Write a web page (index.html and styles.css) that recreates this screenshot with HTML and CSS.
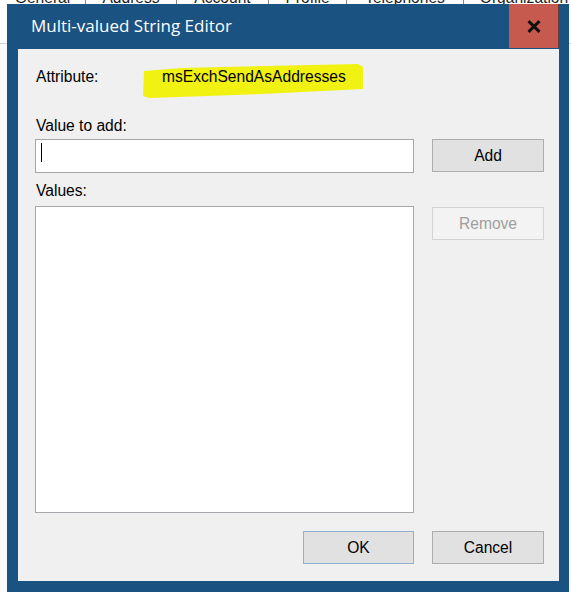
FILE: index.html
```html
<!DOCTYPE html>
<html lang="en">
<head>
<meta charset="utf-8">
<title>Multi-valued String Editor</title>
<link rel="stylesheet" href="styles.css">
</head>
<body>
<div class="desktop">
  <div class="sheet">
    <div class="tabstrip">
      <div class="tab t1">General</div>
      <div class="tab t2">Address</div>
      <div class="tab t3">Account</div>
      <div class="tab t4">Profile</div>
      <div class="tab t5">Telephones</div>
      <div class="tab t6">Organization</div>
    </div>
    <div class="sheet-gap"></div>
    <div class="sheet-body"></div>
  </div>

  <div class="dialog">
    <div class="titlebar">
      <div class="title">Multi-valued String Editor</div>
      <div class="close">
        <svg class="close-x" viewBox="0 0 14 13" width="14" height="13">
          <path d="M1.5 1.2 L12.5 11.8 M12.5 1.2 L1.5 11.8" stroke="#111" stroke-width="3" fill="none"/>
        </svg>
      </div>
    </div>
    <div class="panel">
      <div class="attr-row">
        <span class="label attr-label">Attribute:</span>
        <span class="attr-value">
          <svg class="marker" viewBox="0 0 222 36" width="222" height="36">
            <polygon points="2,8 40,5 216,1 221,4 221,26 120,31 8,35 1,33" fill="#f2f212"/>
          </svg>
          <span class="attr-text">msExchSendAsAddresses</span>
        </span>
      </div>

      <div class="label field-label">Value to add:</div>
      <div class="row input-row">
        <div class="textbox"><span class="caret"></span></div>
        <div class="btn">Add</div>
      </div>

      <div class="label values-label">Values:</div>
      <div class="row list-row">
        <div class="listbox"></div>
        <div class="btn btn-disabled">Remove</div>
      </div>

      <div class="row footer-row">
        <div class="btn btn-default">OK</div>
        <div class="btn">Cancel</div>
      </div>
    </div>
  </div>
</div>
</body>
</html>
```

FILE: styles.css
```css
html, body {
  margin: 0;
  padding: 0;
}

body {
  background: #ffffff;
  font-family: "Liberation Sans", Arial, sans-serif;
  color: #000;
}

.desktop {
  position: relative;
  width: 571px;
  height: 592px;
  overflow: hidden;
}

/* background property sheet */
.tabstrip {
  display: flex;
  align-items: flex-end;
  height: 7px;
  overflow: hidden;
  font-size: 15.6px;
  line-height: 18px;
  color: #1e1e1e;
}

.tab {
  flex: none;
  height: 18px;
  text-align: center;
  border-right: 1px solid #8a8a8a;
  box-sizing: border-box;
}

.t1 { width: 86px; }
.t2 { width: 91px; }
.t3 { width: 92px; }
.t4 { width: 78px; }
.t5 { width: 117px; }
.t6 { width: 120px; border-right: none; }

.sheet-gap {
  height: 36px;
}

.sheet-body {
  border-top: 1px solid #d2d2d2;
  height: 548px;
  background: #fbfbfb;
}

/* dialog window */
.dialog {
  position: absolute;
  left: 7px;
  top: 4px;
  width: 562px;
  height: 588px;
  background: #1a5282;
  display: flex;
  flex-direction: column;
}

.titlebar {
  display: flex;
  height: 45px;
  flex: none;
}

.title {
  flex: 1;
  padding: 10px 0 0 24px;
  font-family: "Open Sans", "Noto Sans", sans-serif;
  font-size: 17px;
  line-height: 23px;
  color: #ffffff;
}

.close {
  width: 50px;
  height: 44px;
  margin-right: 10px;
  background: #c65a4f;
  display: flex;
  align-items: center;
  justify-content: center;
  box-shadow: inset -1px 0 0 #6b3a3a;
}

.close-x {
  display: block;
}

.panel {
  margin: 0 10px 0 11px;
  height: 532px;
  box-sizing: border-box;
  background: #f0f0f0;
  padding: 19px 15px 0 17px;
  font-size: 15.6px;
  line-height: 18px;
  display: flex;
  flex-direction: column;
}

.label {
  padding-left: 1px;
}

.attr-row {
  display: flex;
  height: 18px;
}

.attr-label {
  width: 126px;
  flex: none;
}

.attr-value {
  position: relative;
}

.marker {
  position: absolute;
  left: -20px;
  top: -5px;
  display: block;
}

.attr-text {
  position: relative;
}

.field-label {
  margin-top: 31px;
}

.row {
  display: flex;
  column-gap: 18px;
  align-items: flex-start;
}

.input-row {
  margin-top: 4px;
}

.textbox {
  width: 379px;
  height: 34px;
  box-sizing: border-box;
  background: #ffffff;
  border: 1px solid #a5a9ae;
  padding: 3px 0 0 5px;
}

.caret {
  display: block;
  width: 1px;
  height: 19px;
  background: #000;
}

.btn {
  width: 112px;
  height: 33px;
  box-sizing: border-box;
  background: #e1e1e1;
  border: 1px solid #adadad;
  display: flex;
  align-items: center;
  justify-content: center;
  color: #000;
}

.values-label {
  margin-top: 9px;
}

.list-row {
  margin-top: 6px;
}

.listbox {
  width: 379px;
  height: 307px;
  box-sizing: border-box;
  background: #ffffff;
  border: 1px solid #a5a9ae;
}

.btn-disabled {
  margin-top: 1px;
  background: #f3f3f3;
  border-color: #d3d3d3;
  color: #9e9e9e;
}

.footer-row {
  margin-top: 18px;
  justify-content: flex-end;
  column-gap: 18px;
}

.btn-default {
  width: 111px;
  border-color: #8fb0d2;
}
```
